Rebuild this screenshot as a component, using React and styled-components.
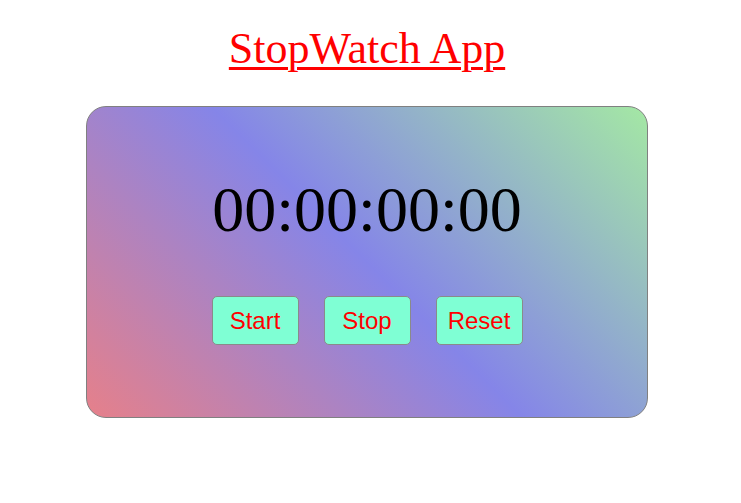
import React from "react";
import styled, { createGlobalStyle } from "styled-components";

const Global = createGlobalStyle`
  html, body { margin: 0; padding: 0; background: #ffffff; }
`;

const Page = styled.div`
  width: 734px;
  display: flex;
  flex-direction: column;
  align-items: center;
  padding-top: 25px;
`;

const Title = styled.h1`
  margin: 0;
  font-family: "Liberation Serif", "Times New Roman", serif;
  font-weight: 400;
  font-size: 44px;
  line-height: 48px;
  color: #ff0000;
  text-decoration: underline;
  text-decoration-thickness: 3px;
  text-underline-offset: 4px;
`;

const Card = styled.div`
  box-sizing: border-box;
  margin-top: 33px;
  width: 562px;
  height: 312px;
  border: 1px solid #808080;
  border-radius: 20px;
  background: linear-gradient(45deg, #e6808a 0%, #8585e8 50%, #a4e8a4 100%);
  display: flex;
  flex-direction: column;
  align-items: center;
  padding-top: 67px;
`;

const Time = styled.div`
  font-family: "Liberation Serif", "Times New Roman", serif;
  font-size: 64px;
  line-height: 72px;
  color: #000000;
`;

const Controls = styled.div`
  margin-top: 50px;
  display: flex;
  gap: 25px;
`;

const Button = styled.button`
  box-sizing: border-box;
  width: 87px;
  height: 49px;
  padding: 0;
  border: 1px solid #8a8a8a;
  border-radius: 5px;
  background: #7fffd4;
  color: #ff0000;
  font-family: "Liberation Sans", Arial, sans-serif;
  font-size: 24px;
  cursor: pointer;
`;

export default function App() {
  return (
    <>
      <Global />
      <Page>
        <Title>StopWatch App</Title>
        <Card>
          <Time>00:00:00:00</Time>
          <Controls>
            <Button>Start</Button>
            <Button>Stop</Button>
            <Button>Reset</Button>
          </Controls>
        </Card>
      </Page>
    </>
  );
}
